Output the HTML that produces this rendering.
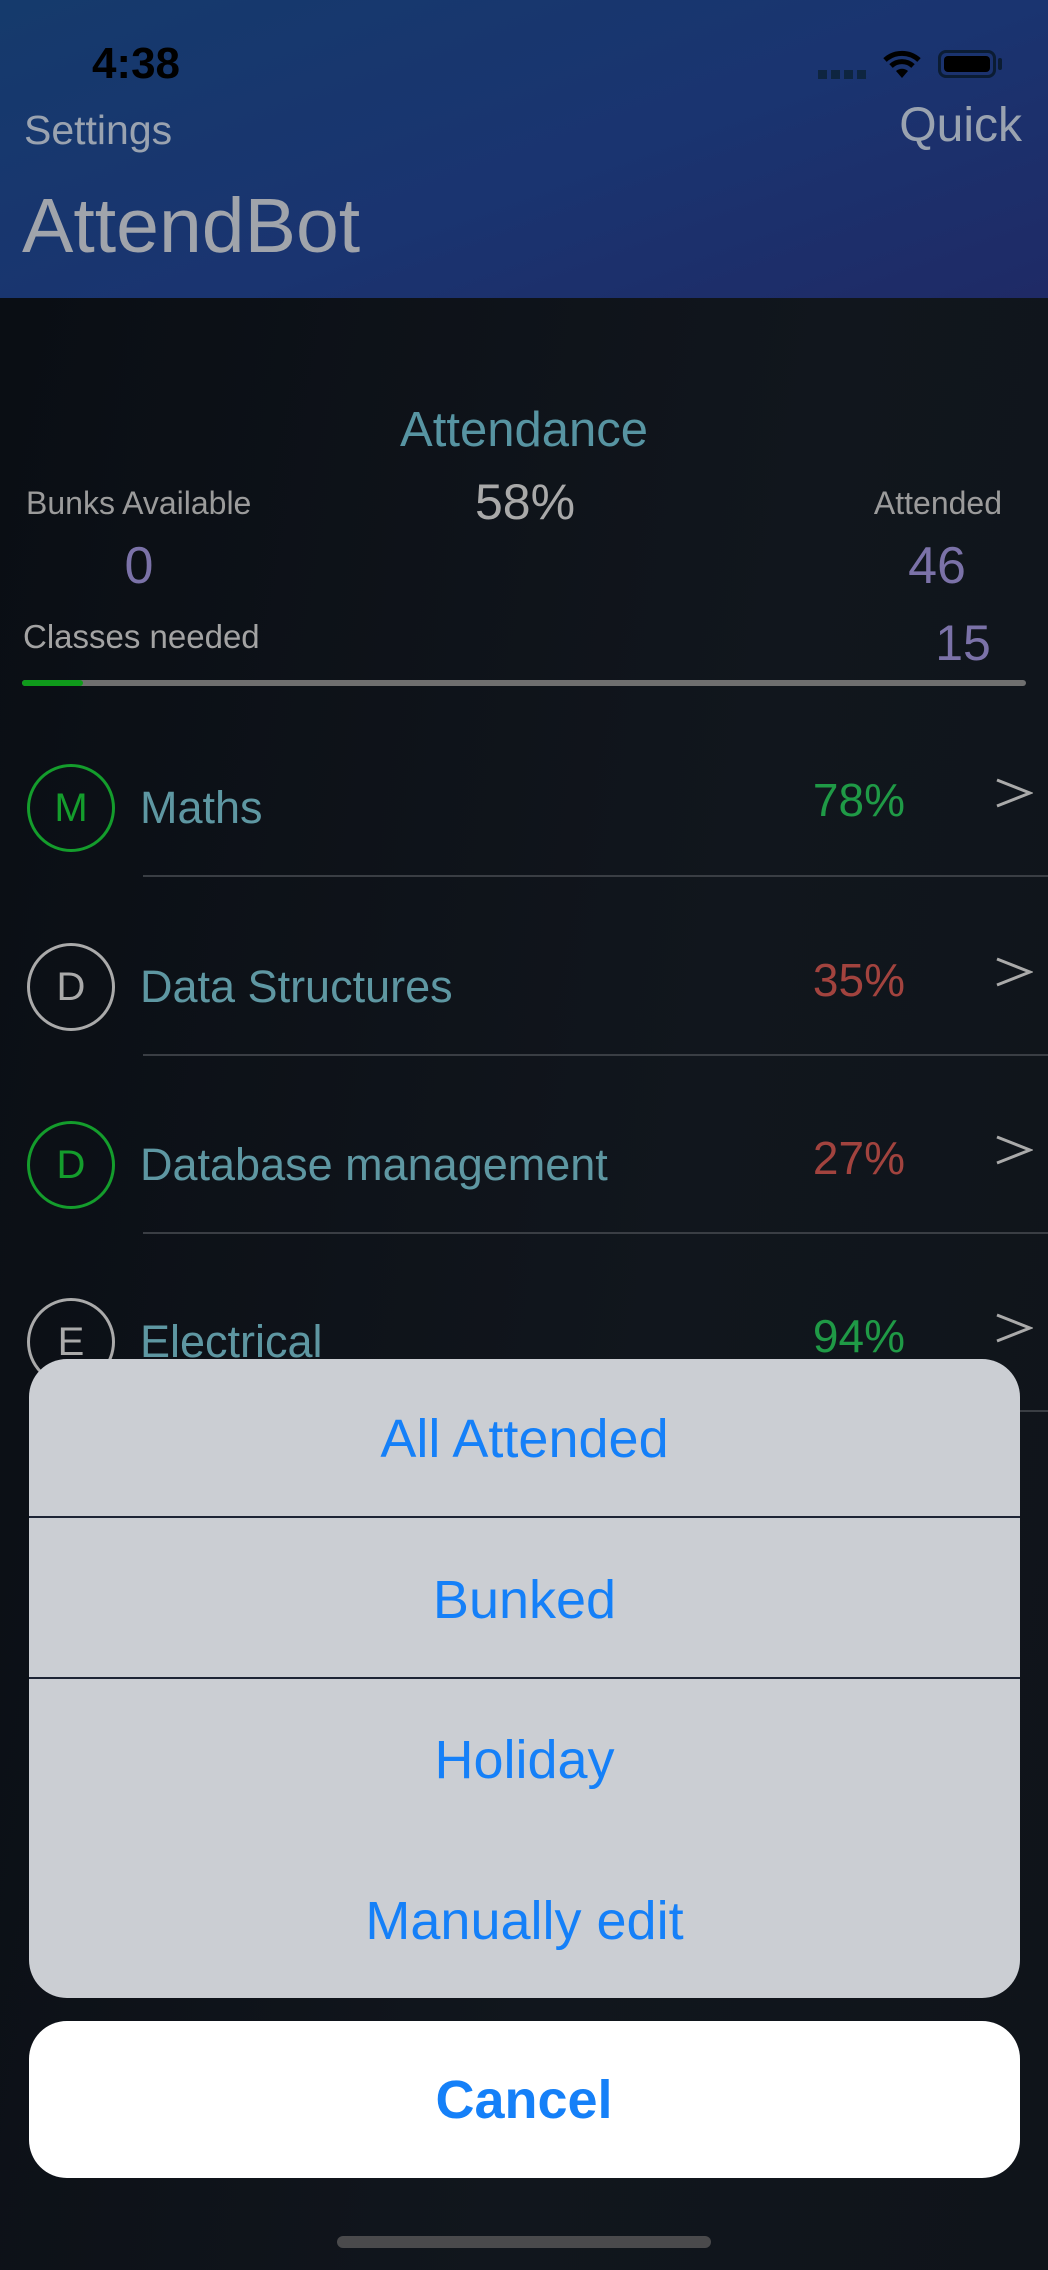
<!DOCTYPE html>
<html><head><meta charset="utf-8"><style>
*{margin:0;padding:0;box-sizing:border-box}
body{width:1048px;height:2270px;overflow:hidden;background:#0d1117;font-family:"Liberation Sans",sans-serif;position:relative}
.a{position:absolute;white-space:nowrap}
.hdr{position:absolute;left:0;top:0;width:1048px;height:298px;background:linear-gradient(160deg,#153a6c 0%,#1a3470 55%,#1f2a66 100%)}
.main{position:absolute;left:0;top:298px;width:1048px;height:1972px;background:linear-gradient(100deg,#0a0e14,#11161d 60%,#0f141a)}
.c{transform:translate(-50%,-50%)}
.circ{position:absolute;width:88px;height:88px;border-radius:50%;border:3px solid #aaa;left:27px;display:flex;align-items:center;justify-content:center;font-size:40px;color:#aaa}
.sub{position:absolute;left:140px;font-size:45px;color:#5e97a2;transform:translateY(-50%)}
.pct{position:absolute;right:143px;font-size:46px;transform:translateY(-50%)}
.chev{position:absolute;left:995px}
.sep{position:absolute;left:143px;right:0;height:2px;background:#3a3e44}
.sheet{position:absolute;left:29px;top:1359px;width:991px;height:639px;background:#cbced3;border-radius:38px;overflow:hidden}
.it{position:absolute;left:0;width:100%;text-align:center;font-size:54px;color:#1580f8;transform:translateY(-50%)}
.line{position:absolute;left:0;width:100%;height:2px;background:#1d2535}
</style></head><body>
<div class="hdr"></div>
<div class="main"></div>
<div class="a c" style="left:136px;top:64px;font-size:44px;font-weight:bold;color:#000">4:38</div>
<div class="a" style="left:818px;top:70px;width:52px;height:9px;background:repeating-linear-gradient(90deg,#0e2540 0 9px,transparent 9px 13px)"></div>
<svg class="a" style="left:882px;top:48px" width="40" height="32" viewBox="0 0 40 32"><path d="M3 12 A25 25 0 0 1 37 12" stroke="#000" stroke-width="5" fill="none"/><path d="M9 18 A16 16 0 0 1 31 18" stroke="#000" stroke-width="5" fill="none"/><path d="M20 30 L14 23 A9 9 0 0 1 26 23 Z" fill="#000"/></svg>
<div class="a" style="left:938px;top:50px;width:58px;height:28px;border:3px solid #0b1c33;border-radius:8px;padding:3px"><div style="width:100%;height:100%;background:#000;border-radius:4px"></div></div>
<div class="a" style="left:998px;top:58px;width:4px;height:12px;background:#0b1c33;border-radius:2px"></div>
<div class="a" style="left:24px;top:107px;font-size:41px;color:#9aa3b0">Settings</div>
<div class="a" style="right:26px;top:98px;font-size:48px;color:#9aa3b0">Quick</div>
<div class="a" style="left:22px;top:182px;font-size:77px;color:#a0a4ab">AttendBot</div>

<div class="a c" style="left:524px;top:430px;font-size:49px;color:#5794a2">Attendance</div>
<div class="a c" style="left:525px;top:502px;font-size:50px;color:#a9a9a9">58%</div>
<div class="a" style="left:26px;top:485px;font-size:32px;color:#9b9b9b">Bunks Available</div>
<div class="a" style="right:46px;top:485px;font-size:32px;color:#9b9b9b">Attended</div>
<div class="a c" style="left:139px;top:566px;font-size:52px;color:#7b72a8">0</div>
<div class="a c" style="left:937px;top:566px;font-size:52px;color:#7b72a8">46</div>
<div class="a" style="left:23px;top:618px;font-size:33px;color:#a3a3a3">Classes needed</div>
<div class="a c" style="left:963px;top:643px;font-size:50px;color:#7b72a8">15</div>
<div class="a" style="left:22px;top:680px;width:1004px;height:6px;background:#6f6f6f;border-radius:3px"></div>
<div class="a" style="left:22px;top:680px;width:61px;height:6px;background:#0f9a1b;border-radius:3px"></div>

<div class="circ" style="top:764px;border-color:#149d2c;color:#149d2c">M</div>
<div class="sub" style="top:808px">Maths</div>
<div class="pct" style="top:800px;color:#1f9a46">78%</div>
<svg class="chev" style="top:778px" width="38" height="30" viewBox="0 0 38 30"><path d="M2 2 L35 15 L2 28" stroke="#aaa" stroke-width="3" fill="none"/></svg>
<div class="sep" style="top:875px"></div>

<div class="circ" style="top:943px">D</div>
<div class="sub" style="top:987px">Data Structures</div>
<div class="pct" style="top:980px;color:#a2433e">35%</div>
<svg class="chev" style="top:957px" width="38" height="30" viewBox="0 0 38 30"><path d="M2 2 L35 15 L2 28" stroke="#aaa" stroke-width="3" fill="none"/></svg>
<div class="sep" style="top:1054px"></div>

<div class="circ" style="top:1121px;border-color:#149d2c;color:#149d2c">D</div>
<div class="sub" style="top:1165px">Database management</div>
<div class="pct" style="top:1158px;color:#a2433e">27%</div>
<svg class="chev" style="top:1135px" width="38" height="30" viewBox="0 0 38 30"><path d="M2 2 L35 15 L2 28" stroke="#aaa" stroke-width="3" fill="none"/></svg>
<div class="sep" style="top:1232px"></div>

<div class="circ" style="top:1298px">E</div>
<div class="sub" style="top:1342px">Electrical</div>
<div class="pct" style="top:1336px;color:#1f9a46">94%</div>
<svg class="chev" style="top:1313px" width="38" height="30" viewBox="0 0 38 30"><path d="M2 2 L35 15 L2 28" stroke="#aaa" stroke-width="3" fill="none"/></svg>
<div class="sep" style="top:1410px"></div>

<div class="sheet">
<div class="it" style="top:80px">All Attended</div>
<div class="line" style="top:157px"></div>
<div class="it" style="top:241px">Bunked</div>
<div class="line" style="top:318px"></div>
<div class="it" style="top:401px">Holiday</div>
<div class="it" style="top:562px">Manually edit</div>
</div>
<div class="a" style="left:29px;top:2021px;width:991px;height:157px;background:#fff;border-radius:38px"></div>
<div class="a c" style="left:524px;top:2100px;font-size:54px;font-weight:bold;color:#1580f8">Cancel</div>
<div class="a" style="left:337px;top:2236px;width:374px;height:12px;background:#4a4a4c;border-radius:6px"></div>
</body></html>
